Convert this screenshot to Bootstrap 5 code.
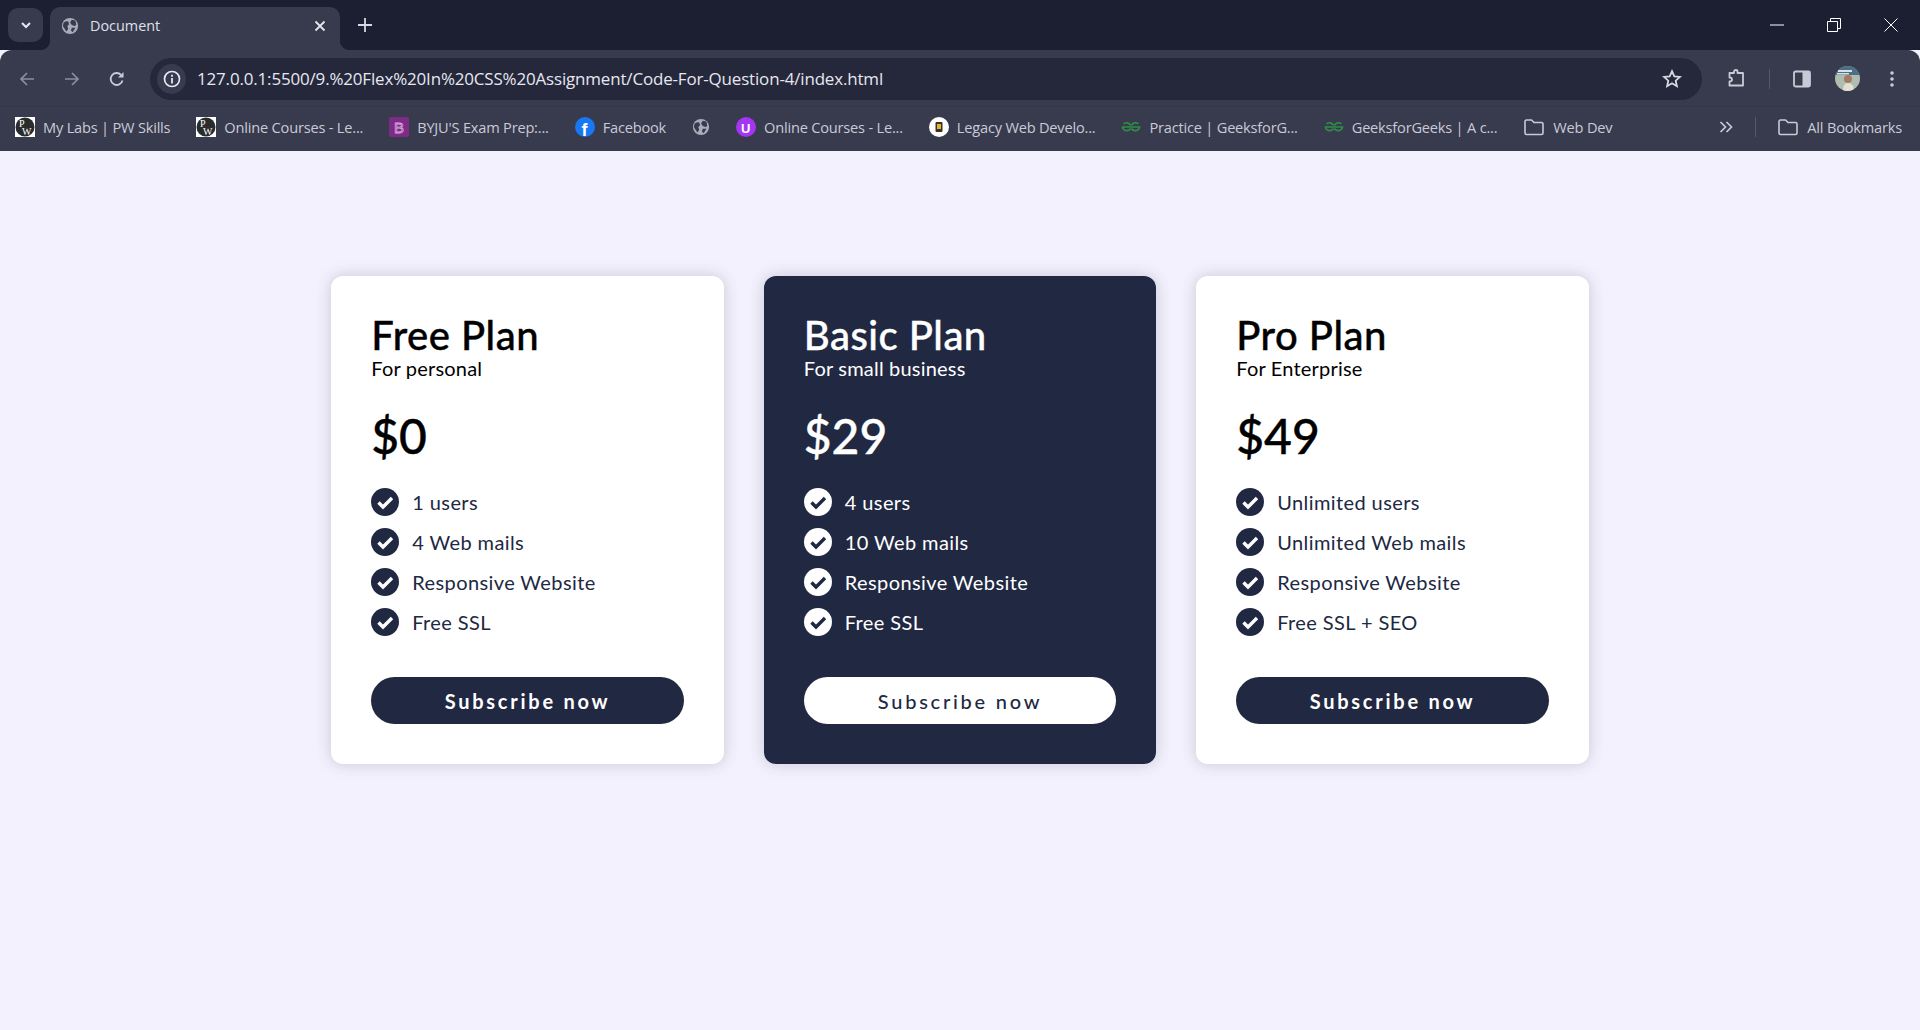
<!DOCTYPE html>
<html lang="en">
<head>
	<meta charset="UTF-8">
	<meta name="viewport" content="width=device-width, initial-scale=1.0">
	<title>Document</title>
	<link href="https://cdn.jsdelivr.net/npm/bootstrap@5.3.0/dist/css/bootstrap.min.css" rel="stylesheet">
	<style>
        html, body {
            height: 100%;
        }
        body {
            background-color: #f3f1fd;
            font-family: "Lato", "Liberation Sans", sans-serif;
            overflow: hidden;
        }
        /* browser frame */
        .frame-top {
            height: 50px;
            background-color: #1c1e31;
            padding-left: 8px;
        }
        .tab-list-btn {
            width: 35px;
            height: 34px;
            margin-top: 8px;
            background-color: #383a4e;
            border-radius: 10px;
        }
        .doc-tab {
            position: relative;
            width: 290px;
            height: 43px;
            margin-top: 7px;
            margin-left: 7px;
            padding: 0 14px 5px 11px;
            background-color: #383a4e;
            border-radius: 10px 10px 0 0;
            color: #dfe0ea;
            font: 14.4px/1 "Open Sans", sans-serif;
        }
        .doc-tab::before, .doc-tab::after {
            content: "";
            position: absolute;
            bottom: 0;
            width: 10px;
            height: 10px;
        }
        .doc-tab::before {
            left: -10px;
            background: radial-gradient(circle at 0 0, #1c1e31 10px, #383a4e 10.5px);
        }
        .doc-tab::after {
            right: -10px;
            background: radial-gradient(circle at 100% 0, #1c1e31 10px, #383a4e 10.5px);
        }
        .tab-globe {
            margin-right: 11px;
        }
        .new-tab {
            margin-left: 18px;
        }
        .window-btns {
            gap: 43px;
            padding-right: 22px;
        }
        .frame-toolbar {
            height: 57px;
            background-color: #383a4e;
            border-radius: 12px 12px 0 0;
            padding: 1px 25px 0 19px;
            border-bottom: 1px solid #343649;
        }
        .nav-icons {
            gap: 29px;
            width: 131px;
        }
        .omnibox {
            width: 1552px;
            height: 42px;
            background-color: #25273b;
            border-radius: 21px;
            padding: 0 20px 0 7px;
            color: #e6e7f0;
        }
        .info-dot {
            width: 29px;
            height: 30px;
            border-radius: 50%;
            background-color: #383a4e;
            margin-right: 11px;
        }
        .url-text {
            font: 16.95px/1 "Open Sans", sans-serif;
            letter-spacing: -0.15px;
            padding-top: 1px;
        }
        .tool-icons {
            gap: 22px;
            margin-left: 23px;
        }
        .tool-avatar {
            margin-left: 1px;
        }
        .tool-kebab {
            margin-left: 7px;
        }
        .tool-sep {
            width: 1px;
            height: 20px;
            background-color: #55576b;
        }
        .frame-bookmarks {
            height: 44px;
            background-color: #383a4e;
            padding: 0 18px 4px 15px;
            color: #c9cad6;
            font: 14.6px/1 "Open Sans", sans-serif;
            letter-spacing: -0.2px;
            white-space: nowrap;
        }
        .bm-row {
            gap: 26px;
        }
        .bm-item {
            gap: 8px;
        }
        .bm-sep {
            width: 1px;
            height: 20px;
            margin: 0 13px 0 10px;
            background-color: #55576b;
        }
        /* pricing */
        .plans {
            padding-top: 125px;
            gap: 40px;
        }
        .plan-card {
            --tick-mark: #fff;
            width: 392.5px;
            height: 488px;
            padding: 39px 40px 40px;
            background-color: #fff;
            border: 0;
            border-radius: 12px;
            box-shadow: 0 0 16px rgba(33, 40, 66, 0.2);
            color: #000;
        }
        .plan-card.dark {
            --tick-mark: #212842;
            background-color: #212842;
            color: #fff;
        }
        .plan-name {
            font-size: 40px;
            line-height: 40px;
            font-weight: 500;
            margin: 0;
            letter-spacing: 0.5px;
            -webkit-text-stroke: 0.4px currentColor;
        }
        .plan-for {
            font-size: 20px;
            line-height: 27px;
            margin: 0;
            letter-spacing: 0.2px;
        }
        .plan-price {
            font-size: 48px;
            line-height: 56px;
            font-weight: 500;
            margin: 26px 0 0;
            -webkit-text-stroke: 0.4px currentColor;
        }
        .plan-list {
            margin: 18px 0 0;
            padding: 0;
            list-style: none;
        }
        .plan-list li {
            display: flex;
            align-items: center;
            gap: 13px;
            height: 40px;
            font-size: 20px;
            letter-spacing: 0.4px;
            color: #212842;
        }
        .plan-card.dark .plan-list li {
            color: #fff;
        }
        .tick-line {
            stroke: var(--tick-mark);
        }
        .plan-btn {
            display: block;
            flex-shrink: 0;
            width: 100%;
            height: 47px;
            margin-top: 35px;
            padding: 0;
            background-color: #212842;
            border: 0;
            color: #fff;
            font-size: 20px;
            font-weight: 700;
            letter-spacing: 2.75px;
        }
        .plan-card.dark .plan-btn {
            background-color: #fff;
            color: #212842;
            font-weight: 500;
        }
	</style>
</head>
<body>
<svg width="0" height="0" class="position-absolute">
	<defs>
		<symbol id="globe" viewBox="0 0 20 20">
			<circle cx="10" cy="10" r="9" fill="#a9abb8"/>
			<path d="M3 6c2-1 3-2 5-1l1 3-2 2 1 3-2 3-2-3-2-3zM12 3l4 1 1 5-2 1-3-1-2-3zM12 12l4 0-3 5-2-2z" fill="#383a4e"/>
		</symbol>
		<symbol id="folder" viewBox="0 0 22 20">
			<path d="M2 4.5c0-.8.6-1.5 1.5-1.5h5l2.5 2.500h7.500c.8 0 1.500.7 1.500 1.500v9c0 .8-.7 1.500-1.500 1.500h-15c-.9 0-1.500-.7-1.500-1.500z" fill="none" stroke="#c9cad6" stroke-width="1.600"/>
		</symbol>
		<symbol id="pw" viewBox="0 0 20 20">
			<rect width="20" height="20" fill="#fff"/>
			<circle cx="10" cy="10" r="9.500" fill="#2a2c2c"/>
			<text x="4" y="10" font-family="Liberation Serif" font-size="10" fill="#fff">P</text>
			<text x="7" y="18" font-family="Liberation Serif" font-size="10" fill="#fff">W</text>
		</symbol>
		<symbol id="gfg" viewBox="0 0 20 20">
			<path d="M10 10h8.500a4.300 4.300 0 0 1-8 1.500M10 10H1.500a4.300 4.300 0 0 0 8 1.500M17.500 7a4.300 4.300 0 0 0-7 1.500M2.500 7a4.300 4.300 0 0 1 7 1.500" fill="none" stroke="#2f8d46" stroke-width="1.700"/>
		</symbol>
		<symbol id="tick" viewBox="0 0 28 28">
			<circle cx="14" cy="14" r="14" fill="currentColor"/>
			<path d="M7.500 14.500l4.500 4.500 9-9" fill="none" class="tick-line" stroke-width="3.400"/>
		</symbol>
	</defs>
</svg>

<header>
	<div class="frame-top d-flex">
		<div class="tab-list-btn d-flex align-items-center justify-content-center">
			<svg width="12" height="12" viewBox="0 0 12 12"><path d="M2 4l4 4 4-4" fill="none" stroke="#e6e7f0" stroke-width="2"/></svg>
		</div>
		<div class="doc-tab d-flex align-items-center">
			<svg width="18" height="18" class="tab-globe flex-shrink-0"><use href="#globe"/></svg>
			<span class="flex-grow-1">Document</span>
			<svg width="12" height="12" viewBox="0 0 12 12"><path d="M1.500 1.500l9 9M10.500 1.500l-9 9" stroke="#e6e7f0" stroke-width="1.800"/></svg>
		</div>
		<div class="new-tab d-flex align-items-center">
			<svg width="14" height="14" viewBox="0 0 14 14"><path d="M7 0v14M0 7h14" stroke="#d8d9e4" stroke-width="1.800"/></svg>
		</div>
		<div class="window-btns d-flex align-items-center ms-auto">
			<svg width="14" height="14" viewBox="0 0 14 14"><path d="M0 7h14" stroke="#fff"/></svg>
			<svg width="14" height="14" viewBox="0 0 14 14"><path d="M.5 3.500h10v10H.5zM3.500 3.500V.5h10v10h-3" fill="none" stroke="#fff"/></svg>
			<svg width="14" height="14" viewBox="0 0 14 14"><path d="M.5.500l13 13M13.500.500l-13 13" stroke="#fff"/></svg>
		</div>
	</div>
	<div class="frame-toolbar d-flex align-items-center">
		<div class="nav-icons d-flex align-items-center flex-shrink-0">
			<svg width="16" height="16" viewBox="0 0 16 16"><path d="M15 8H2M8 2L2 8l6 6" fill="none" stroke="#8c8e9c" stroke-width="1.700"/></svg>
			<svg width="16" height="16" viewBox="0 0 16 16"><path d="M1 8h13M8 2l6 6-6 6" fill="none" stroke="#8c8e9c" stroke-width="1.700"/></svg>
			<svg width="16" height="16" viewBox="0 0 16 16"><path d="M13.500 9.500A6 6 0 1 1 12 3.800" fill="none" stroke="#c9cad6" stroke-width="1.800"/><path d="M14.500 1v5.500H9z" fill="#c9cad6"/></svg>
		</div>
		<div class="omnibox d-flex align-items-center flex-shrink-0">
			<div class="info-dot d-flex align-items-center justify-content-center flex-shrink-0">
				<svg width="18" height="18" viewBox="0 0 18 18"><circle cx="9" cy="9" r="7.500" fill="none" stroke="#e6e7f0" stroke-width="1.700"/><path d="M9 8v5.500M9 4.700v2" stroke="#e6e7f0" stroke-width="1.800"/></svg>
			</div>
			<span class="url-text flex-grow-1">127.0.0.1:5500/9.%20Flex%20In%20CSS%20Assignment/Code-For-Question-4/index.html</span>
			<svg width="20" height="20" viewBox="0 0 20 20"><path d="M10 2.200l2.300 5.200 5.600.5-4.200 3.800 1.200 5.500-4.900-2.900-4.900 2.900 1.200-5.500L2.100 7.900l5.600-.5z" fill="none" stroke="#d8d9e4" stroke-width="1.800"/></svg>
		</div>
		<div class="tool-icons d-flex align-items-center">
			<svg width="22" height="22" viewBox="0 0 22 22"><path d="M9 3.500c0-2 3.500-2 3.500 0V5h5.500v12.500H4.500V13.500c2 0 2.500-1 2.500-2s-.5-2-2.500-2V5H9z" fill="none" stroke="#c9cad6" stroke-width="1.800" stroke-linejoin="round"/></svg>
			<div class="tool-sep"></div>
			<svg width="20" height="20" viewBox="0 0 20 20"><rect x="2" y="2.500" width="16" height="15" rx="1.500" fill="none" stroke="#c9cad6" stroke-width="1.800"/><rect x="10.500" y="2.500" width="7.500" height="15" fill="#c9cad6"/></svg>
			<svg width="25" height="25" viewBox="0 0 25 25" class="tool-avatar"><defs><clipPath id="ava"><ellipse cx="12.500" cy="12.500" rx="12.500" ry="12.500"/></clipPath></defs><g clip-path="url(#ava)"><rect width="25" height="25" fill="#aebdb0"/><rect width="25" height="9" fill="#4d6f86"/><path d="M3 4h14v2H3zM2 7h12v1.500H2z" fill="#d9e3e6"/><circle cx="13" cy="13" r="4" fill="#a47a62"/><path d="M8 25c0-6 2-8 5-8s6 2 6 8z" fill="#e3dfd2"/></g></svg>
			<svg width="6" height="18" viewBox="0 0 6 18" class="tool-kebab"><circle cx="3" cy="3" r="1.800" fill="#c9cad6"/><circle cx="3" cy="9" r="1.800" fill="#c9cad6"/><circle cx="3" cy="15" r="1.800" fill="#c9cad6"/></svg>
		</div>
	</div>
	<div class="frame-bookmarks d-flex align-items-center justify-content-between">
		<div class="bm-row d-flex align-items-center">
			<div class="bm-item d-flex align-items-center"><svg width="20" height="20"><use href="#pw"/></svg>My Labs | PW Skills</div>
			<div class="bm-item d-flex align-items-center"><svg width="20" height="20"><use href="#pw"/></svg>Online Courses - Le...</div>
			<div class="bm-item d-flex align-items-center">
				<svg width="20" height="20" viewBox="0 0 20 20"><rect width="20" height="20" rx="2" fill="#7d2b86"/><text x="5" y="16" font-family="Liberation Sans" font-size="15" fill="none" stroke="#d9a9de" stroke-width=".8">B</text></svg>
				BYJU'S Exam Prep:...
			</div>
			<div class="bm-item d-flex align-items-center">
				<svg width="20" height="20" viewBox="0 0 20 20"><circle cx="10" cy="10" r="10" fill="#1877f2"/><text x="6.500" y="19" font-family="Liberation Sans" font-weight="700" font-size="18" fill="#fff">f</text></svg>
				Facebook
			</div>
			<svg width="18" height="18"><use href="#globe"/></svg>
			<div class="bm-item d-flex align-items-center">
				<svg width="20" height="20" viewBox="0 0 20 20"><circle cx="10" cy="10" r="10" fill="#a435f0"/><text x="5" y="16" font-family="Liberation Sans" font-weight="700" font-size="13" fill="#fff">U</text></svg>
				Online Courses - Le...
			</div>
			<div class="bm-item d-flex align-items-center">
				<svg width="20" height="20" viewBox="0 0 20 20"><circle cx="10" cy="10" r="10" fill="#fff"/><rect x="6.500" y="5" width="7" height="10" rx="1" fill="#3a3326"/><rect x="8" y="7" width="4" height="5" fill="#e5b32f"/></svg>
				Legacy Web Develo...
			</div>
			<div class="bm-item d-flex align-items-center"><svg width="20" height="20"><use href="#gfg"/></svg>Practice | GeeksforG...</div>
			<div class="bm-item d-flex align-items-center"><svg width="20" height="20"><use href="#gfg"/></svg>GeeksforGeeks | A c...</div>
			<div class="bm-item d-flex align-items-center"><svg width="22" height="20"><use href="#folder"/></svg>Web Dev</div>
		</div>
		<div class="d-flex align-items-center gap-2">
			<svg width="14" height="14" viewBox="0 0 14 14" class="me-1"><path d="M1.500 2l5 5-5 5M7.500 2l5 5-5 5" fill="none" stroke="#c9cad6" stroke-width="1.700"/></svg>
			<div class="bm-sep"></div>
			<div class="bm-item d-flex align-items-center"><svg width="22" height="20"><use href="#folder"/></svg>All Bookmarks</div>
		</div>
	</div>
</header>

<main class="plans d-flex justify-content-center">
	<section class="card plan-card">
		<h2 class="plan-name">Free Plan</h2>
		<p class="plan-for">For personal</p>
		<div class="plan-price">$0</div>
		<ul class="plan-list">
			<li><svg width="28" height="28"><use href="#tick"/></svg>1 users</li>
			<li><svg width="28" height="28"><use href="#tick"/></svg>4 Web mails</li>
			<li><svg width="28" height="28"><use href="#tick"/></svg>Responsive Website</li>
			<li><svg width="28" height="28"><use href="#tick"/></svg>Free SSL</li>
		</ul>
		<button class="btn rounded-pill plan-btn">Subscribe now</button>
	</section>
	<section class="card plan-card dark">
		<h2 class="plan-name">Basic Plan</h2>
		<p class="plan-for">For small business</p>
		<div class="plan-price">$29</div>
		<ul class="plan-list">
			<li><svg width="28" height="28"><use href="#tick"/></svg>4 users</li>
			<li><svg width="28" height="28"><use href="#tick"/></svg>10 Web mails</li>
			<li><svg width="28" height="28"><use href="#tick"/></svg>Responsive Website</li>
			<li><svg width="28" height="28"><use href="#tick"/></svg>Free SSL</li>
		</ul>
		<button class="btn rounded-pill plan-btn">Subscribe now</button>
	</section>
	<section class="card plan-card">
		<h2 class="plan-name">Pro Plan</h2>
		<p class="plan-for">For Enterprise</p>
		<div class="plan-price">$49</div>
		<ul class="plan-list">
			<li><svg width="28" height="28"><use href="#tick"/></svg>Unlimited users</li>
			<li><svg width="28" height="28"><use href="#tick"/></svg>Unlimited Web mails</li>
			<li><svg width="28" height="28"><use href="#tick"/></svg>Responsive Website</li>
			<li><svg width="28" height="28"><use href="#tick"/></svg>Free SSL + SEO</li>
		</ul>
		<button class="btn rounded-pill plan-btn">Subscribe now</button>
	</section>
</main>
<script src="https://cdn.jsdelivr.net/npm/bootstrap@5.3.0/dist/js/bootstrap.bundle.min.js"></script>
</body>
</html>
